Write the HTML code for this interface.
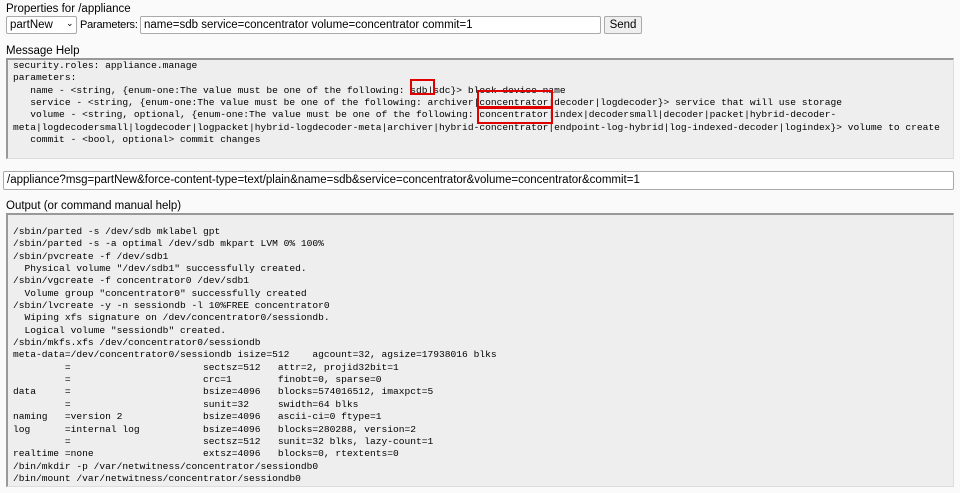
<!DOCTYPE html>
<html><head><style>
body{margin:0;width:960px;height:493px;background:#fafafa;position:relative;overflow:hidden;font-family:"Liberation Sans",sans-serif;font-size:11.5px;color:#000}
.a{position:absolute;white-space:pre}
.m{font-family:"Liberation Mono",monospace;font-size:9.6px;line-height:12.35px;color:#000}
.box{position:absolute;background:#eeeeee;border-top:2px solid #999;border-left:2px solid #999;border-right:1px solid #ddd;border-bottom:1px solid #ddd;overflow:hidden;box-sizing:border-box}
.inp{position:absolute;background:#fff;border:1px solid #aaa;border-radius:2px;box-sizing:border-box;font-size:11.5px;padding:0 3px;line-height:16px;white-space:pre}
.r{position:absolute;border:2px solid #e00000;box-sizing:border-box}
</style></head><body>
<div class="a" style="left:6px;top:3px">Properties for /appliance</div>
<div class="inp" style="left:6px;top:16px;width:71px;height:18px;line-height:16px">partNew</div>
<div class="a" style="left:66px;top:18px;font-size:9px">&#8964;</div>
<div class="inp" style="left:140px;top:16px;width:461px;height:18px">name=sdb service=concentrator volume=concentrator commit=1</div>
<div class="a" style="left:80px;top:19px;font-size:11px;letter-spacing:-0.2px;z-index:2">Parameters:</div>
<div class="inp" style="left:604px;top:16px;width:38px;height:18px;background:#efefef;text-align:center;padding:0">Send</div>
<div class="a" style="left:6px;top:45px">Message Help</div>
<div class="box" style="left:6px;top:58px;width:948px;height:101px"></div>
<div class="a m" style="left:13px;top:60px">security.roles: appliance.manage
parameters:
   name - &lt;string, {enum-one:The value must be one of the following: sdb|sdc}&gt; block device name
   service - &lt;string, {enum-one:The value must be one of the following: archiver|concentrator|decoder|logdecoder}&gt; service that will use storage
   volume - &lt;string, optional, {enum-one:The value must be one of the following: concentrator|index|decodersmall|decoder|packet|hybrid-decoder-
meta|logdecodersmall|logdecoder|logpacket|hybrid-logdecoder-meta|archiver|hybrid-concentrator|endpoint-log-hybrid|log-indexed-decoder|logindex}&gt; volume to create
   commit - &lt;bool, optional&gt; commit changes</div>
<div class="r" style="left:410px;top:79px;width:25px;height:16px"></div>
<div class="r" style="left:477px;top:90px;width:76px;height:18px"></div>
<div class="r" style="left:477px;top:107px;width:76px;height:17px"></div>
<div class="inp" style="left:3px;top:171px;width:951px;height:19px;line-height:17px">/appliance?msg=partNew&amp;force-content-type=text/plain&amp;name=sdb&amp;service=concentrator&amp;volume=concentrator&amp;commit=1</div>
<div class="a" style="left:6px;top:200px">Output (or command manual help)</div>
<div class="box" style="left:6px;top:213px;width:948px;height:274px"></div>
<div class="a m" style="left:13px;top:226px">/sbin/parted -s /dev/sdb mklabel gpt
/sbin/parted -s -a optimal /dev/sdb mkpart LVM 0% 100%
/sbin/pvcreate -f /dev/sdb1
  Physical volume "/dev/sdb1" successfully created.
/sbin/vgcreate -f concentrator0 /dev/sdb1
  Volume group "concentrator0" successfully created
/sbin/lvcreate -y -n sessiondb -l 10%FREE concentrator0
  Wiping xfs signature on /dev/concentrator0/sessiondb.
  Logical volume "sessiondb" created.
/sbin/mkfs.xfs /dev/concentrator0/sessiondb
meta-data=/dev/concentrator0/sessiondb isize=512    agcount=32, agsize=17938016 blks
         =                       sectsz=512   attr=2, projid32bit=1
         =                       crc=1        finobt=0, sparse=0
data     =                       bsize=4096   blocks=574016512, imaxpct=5
         =                       sunit=32     swidth=64 blks
naming   =version 2              bsize=4096   ascii-ci=0 ftype=1
log      =internal log           bsize=4096   blocks=280288, version=2
         =                       sectsz=512   sunit=32 blks, lazy-count=1
realtime =none                   extsz=4096   blocks=0, rtextents=0
/bin/mkdir -p /var/netwitness/concentrator/sessiondb0
/bin/mount /var/netwitness/concentrator/sessiondb0</div>
</body></html>
